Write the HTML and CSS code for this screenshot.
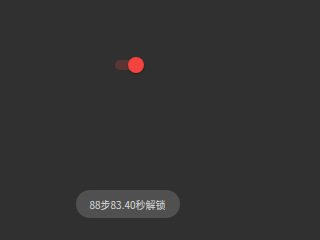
FILE: index.html
```html
<!DOCTYPE html>
<html lang="zh">
<head>
<meta charset="utf-8">
<link rel="stylesheet" href="styles.css">
</head>
<body>
<div class="screen">
  <div class="switch-row">
    <div class="switch">
      <div class="track"></div>
      <div class="thumb"></div>
    </div>
  </div>
  <div class="toast">88步83.40秒解锁</div>
</div>
</body>
</html>
```
FILE: styles.css
```css
html, body {
  margin: 0;
  padding: 0;
  background: #303030;
}
.screen {
  height: 221px;
  width: 255px;
  display: flex;
  flex-direction: column;
  align-items: center;
  box-sizing: border-box;
  padding-top: 57px;
  padding-bottom: 3px;
}
.switch-row {
  display: flex;
  justify-content: center;
  padding-left: 3px;
}
.switch {
  position: relative;
  width: 29px;
  height: 16px;
}
.track {
  position: absolute;
  left: 0;
  top: 3px;
  width: 28px;
  height: 10px;
  border-radius: 5px;
  background: #5a3633;
}
.thumb {
  position: absolute;
  right: 0;
  top: 0;
  width: 16px;
  height: 16px;
  border-radius: 50%;
  background: #f2433f;
  box-shadow: 0 1px 2px rgba(0,0,0,0.35);
}
.toast {
  margin-top: auto;
  width: 104px;
  height: 28px;
  border-radius: 14px;
  background: #505050;
  color: #dcdcdc;
  font-family: "Noto Sans CJK SC", "Noto Sans", sans-serif;
  font-size: 10px;
  display: flex;
  align-items: center;
  justify-content: center;
  padding-top: 1px;
  box-sizing: border-box;
}
```
